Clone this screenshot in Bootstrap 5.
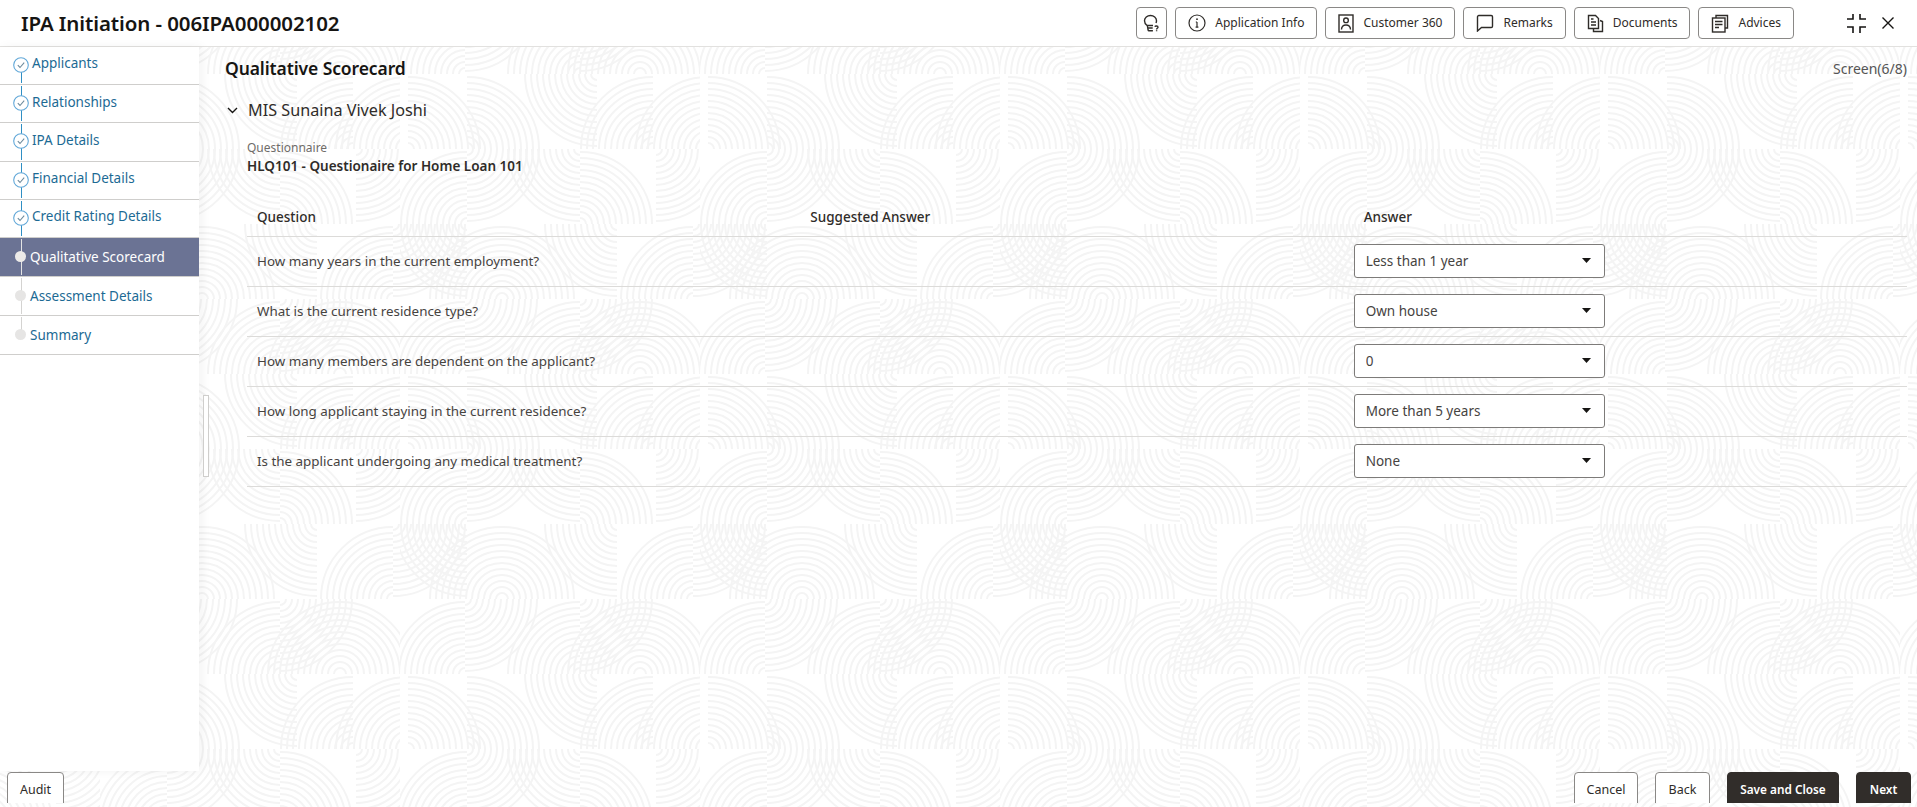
<!DOCTYPE html>
<html lang="en">
<head>
<meta charset="utf-8">
<title>IPA Initiation</title>
<link rel="stylesheet" href="https://cdn.jsdelivr.net/npm/bootstrap@5.3.0/dist/css/bootstrap.min.css">
<style>
html,body{height:100%;overflow:hidden;background:#fff}
body{font-family:"Noto Sans","Open Sans",sans-serif;color:#2f2c29;font-size:14px}
.bg-art{position:absolute;inset:0;width:100%;height:100%;z-index:0}
.shell{position:relative;z-index:1;height:807px}
.top-bar{height:47px;background:#fff;border-bottom:1px solid #e2e1df;padding:0 23px 0 21px}
.page-title{font-size:20.5px;font-weight:600;color:#161513;margin:0;letter-spacing:-.1px}
.hdr-btn{height:32px;padding:0 12px 0 12px;background:#fff;border:1px solid #8a8886;border-radius:4px;font-size:12px;color:#2f2c29;gap:9px;white-space:nowrap}
.hdr-btn svg{flex:none}
.hdr-square{width:31px;padding:0}
.hdr-tools{margin-left:52px;gap:16px}
.work{height:724px}
.side-rail{width:199px;flex:none;background:#fff;box-shadow:3px 0 10px rgba(0,0,0,.05)}
.step{position:relative;height:38.2px;padding-left:13px;border-bottom:1px solid #cfcecc;color:#1c6a94;font-size:13.5px;gap:3px;padding-bottom:4px}
.step.later{height:39px;padding-left:15px;padding-bottom:0;gap:4px}
.step.current{background:#6b7394;color:#fff}
.step::before{content:"";position:absolute;left:20.5px;top:1px;bottom:1px;width:1px;background:#2f8fc4}
.step.later::before{background:#d4d3d1}
.step.current::before{background:#e4e4e4}
.step.last::before{bottom:50%}
.step.first::before{top:50%}
.step svg{position:relative;flex:none;margin-top:3px}
.step-dot{position:relative;width:11px;height:11px;border-radius:50%;background:#e6e5e4;flex:none}
.step.current .step-dot{background:#eceae8}
.step-label{position:relative;white-space:nowrap}
.grip{position:absolute;left:203px;top:395px;width:6px;height:82px;background:#fff;border:1px solid #cfcecc;z-index:2}
.content-pane{padding:0 10px 0 26px;min-width:0}
.pane-title{font-size:17.5px;font-weight:600;color:#161513;margin:0;letter-spacing:-.1px}
.screen-count{font-size:14px;color:#555}
.pane-head{height:42px}
.person{font-size:16.2px;color:#2f2c29;margin:8px 0 0 0;height:26px;gap:10px;padding-left:2px}
.q-label{font-size:12px;color:#6f6c69;line-height:16px;margin:17px 0 0 22px}
.q-value{font-size:13.5px;font-weight:600;color:#2f2c29;line-height:20px;margin:0 0 0 22px}
.q-table{margin:30px 0 0 22px;width:1660px;table-layout:fixed;--bs-table-bg:transparent;--bs-table-color:#46433f;--bs-table-border-color:#dcdbd9}
.q-table th{font-size:13.5px;font-weight:500;color:#2f2c29;padding:0 10px 10px;height:30px;vertical-align:bottom;line-height:18px}
.q-table td{height:50px;padding:0 10px;font-size:13.4px;vertical-align:middle}
.q-select{width:251px;height:34px;padding:0 11px;font-size:13.5px;color:#46433f;border:1px solid #7d7b79;border-radius:3px;background-color:#fff;box-shadow:none;background-size:9px 5px;background-position:right 13px top 13px;background-image:url("data:image/svg+xml,%3Csvg xmlns='http://www.w3.org/2000/svg' viewBox='0 0 9 5'%3E%3Cpath d='M0 0h9L4.500 5z' fill='%23161513'/%3E%3C/svg%3E");margin-left:-10px}
.foot-bar{height:32px;overflow:hidden;padding:0 6px 0 7px}
.foot-btn{height:36px;font-size:12.5px;border-radius:4px;border:1px solid #8a8886;background:#fff;color:#2f2c29;padding:0;margin-top:1px}
.foot-dark{background:#312d2a;border-color:#312d2a;color:#fff;font-weight:600;font-size:11.8px}
.w-audit{width:57px}.w-cancel{width:64px}.w-back{width:55px}.w-save{width:112px}.w-next{width:55px}
.foot-gap{gap:17px}
</style>
</head>
<body>
<svg class="bg-art" xmlns="http://www.w3.org/2000/svg" aria-hidden="true">
  <defs>
    <g id="rings" fill="none" stroke="#f4f4f4" stroke-width="2">
      <circle r="6"/><circle r="12"/><circle r="18"/><circle r="24"/><circle r="30"/><circle r="36"/><circle r="42"/><circle r="48"/><circle r="54"/><circle r="60"/><circle r="66"/><circle r="72"/>
    </g>
    <clipPath id="cTL"><rect x="-74" y="-74" width="74" height="74"/></clipPath>
    <clipPath id="cTR"><rect x="0" y="-74" width="74" height="74"/></clipPath>
    <clipPath id="cBL"><rect x="-74" y="0" width="74" height="74"/></clipPath>
    <clipPath id="cBR"><rect x="0" y="0" width="74" height="74"/></clipPath>
    <g id="qTL" clip-path="url(#cTL)"><use href="#rings"/></g>
    <g id="qTR" clip-path="url(#cTR)"><use href="#rings"/></g>
    <g id="qBL" clip-path="url(#cBL)"><use href="#rings"/></g>
    <g id="qBR" clip-path="url(#cBR)"><use href="#rings"/></g>
    <pattern id="swirl" width="300" height="300" patternUnits="userSpaceOnUse" patternTransform="translate(100 -1)">
      <use href="#qTL" x="65" y="75"/><use href="#qBR" x="65" y="0"/>
      <use href="#qTL" x="180" y="75"/><use href="#qBR" x="180" y="0"/>
      <use href="#qTL" x="240" y="75"/><use href="#qTR" x="240" y="75"/>
      <use href="#qTL" x="308" y="150"/><use href="#qTR" x="8" y="150"/>
      <use href="#qTR" x="67" y="150"/><use href="#qBL" x="197" y="75"/>
      <use href="#qTL" x="253" y="150"/>
      <use href="#qTL" x="67" y="225"/><use href="#qBR" x="67" y="150"/>
      <use href="#qBL" x="180" y="150"/><use href="#qTR" x="180" y="225"/>
      <use href="#qBR" x="256" y="150"/>
      <use href="#qBL" x="67" y="225"/><use href="#qBR" x="-7" y="225"/>
      <use href="#qTL" x="102" y="300"/><use href="#qTR" x="102" y="300"/>
      <use href="#qBL" x="217" y="225"/><use href="#qTL" x="293" y="300"/><use href="#qBR" x="293" y="225"/>
    </pattern>
  </defs>
  <rect width="100%" height="100%" fill="url(#swirl)"/>
</svg>

<div class="shell d-flex flex-column">
  <header class="top-bar d-flex align-items-center">
    <h1 class="page-title">IPA Initiation - 006IPA000002102</h1>
    <div class="ms-auto d-flex align-items-center gap-2">
      <button class="hdr-btn hdr-square d-flex align-items-center justify-content-center" type="button" aria-label="Tips">
        <svg width="20" height="20" viewBox="0 0 20 20" fill="none" stroke="#2f2c29" stroke-width="1.400"><path d="M5 12.500C3.500 11.300 2.500 9.700 2.500 7.800 2.500 4.800 5.200 2.500 8.500 2.500s6 2.300 6 5.300c0 .8-.2 1.500-.5 2.200"/><path d="M5 12.500h6M5.300 12.500l.8 4.500c.1.400.4.700.8.700h4M5.700 15h5"/><path d="M13 13.800c.2-1.100 3-1.100 3 .4 0 1.100-1.400 1-1.400 2.200M14.600 17.300v1"/></svg>
      </button>
      <button class="hdr-btn d-flex align-items-center" type="button">
        <svg width="18" height="18" viewBox="0 0 18 18" fill="none" stroke="#2f2c29" stroke-width="1.200"><circle cx="9" cy="9" r="8"/><path d="M9 8v5.200M7.600 13.200h2.800M7.800 8H9"/><circle cx="9" cy="5.200" r=".9" fill="#2f2c29" stroke="none"/></svg>
        <span>Application Info</span>
      </button>
      <button class="hdr-btn d-flex align-items-center" type="button">
        <svg width="16" height="19" viewBox="0 0 16 19" fill="none" stroke="#2f2c29" stroke-width="1.400"><rect x="1" y="1" width="14" height="17"/><rect x="5.700" y="4" width="4.600" height="4.600" rx="2.200"/><path d="M3.500 15.500c0-3.300 2-4.500 4.500-4.500s4.500 1.200 4.500 4.500"/></svg>
        <span>Customer 360</span>
      </button>
      <button class="hdr-btn d-flex align-items-center" type="button">
        <svg width="18" height="18" viewBox="0 0 18 18" fill="none" stroke="#2f2c29" stroke-width="1.400"><path d="M2.800 1.500h12.400c.7 0 1.300.6 1.300 1.300v9.400c0 .7-.6 1.300-1.300 1.300H5.500l-4 3.500V2.800c0-.7.6-1.300 1.300-1.300z"/></svg>
        <span>Remarks</span>
      </button>
      <button class="hdr-btn d-flex align-items-center" type="button">
        <svg width="17" height="19" viewBox="0 0 17 19" fill="none" stroke="#2f2c29" stroke-width="1.400"><path d="M1.500 1.500h7l3 3v10h-10z"/><path d="M4 8h5M4 11h5M4 5h2.500"/><path d="M13 6.500l2.500 1v10h-9v-3"/></svg>
        <span>Documents</span>
      </button>
      <button class="hdr-btn d-flex align-items-center" type="button">
        <svg width="18" height="19" viewBox="0 0 18 19" fill="none" stroke="#2f2c29" stroke-width="1.400"><path d="M5 4V1.500h11.500v12.500H14"/><rect x="1.500" y="4" width="12.500" height="14"/><path d="M4 7.500h7.500M4 10.500h7.500M4 13.500h4"/></svg>
        <span>Advices</span>
      </button>
    </div>
    <div class="hdr-tools d-flex align-items-center">
      <svg width="20" height="20" viewBox="0 0 20 20" fill="none" stroke="#161513" stroke-width="1.600"><path d="M1 6h6V1M14 1v5h6M1 14h6v6M20 14h-6v6"/></svg>
      <svg width="12" height="12" viewBox="0 0 12 12" fill="none" stroke="#161513" stroke-width="1.400"><path d="M.5.500l11 11M11.500.5l-11 11"/></svg>
    </div>
  </header>

  <div class="work d-flex">
    <nav class="side-rail">
      <div class="step first d-flex align-items-center"><svg width="16" height="16" viewBox="0 0 16 16" fill="#fff" stroke="#62a8d8" stroke-width="1.100"><circle cx="8" cy="8" r="7.300"/><path d="M4.800 8.200l2.200 2.300 4.200-4.800" fill="none" stroke="#6d8a9c"/></svg><span class="step-label">Applicants</span></div>
      <div class="step d-flex align-items-center"><svg width="16" height="16" viewBox="0 0 16 16" fill="#fff" stroke="#62a8d8" stroke-width="1.100"><circle cx="8" cy="8" r="7.300"/><path d="M4.800 8.200l2.200 2.300 4.200-4.800" fill="none" stroke="#6d8a9c"/></svg><span class="step-label">Relationships</span></div>
      <div class="step d-flex align-items-center"><svg width="16" height="16" viewBox="0 0 16 16" fill="#fff" stroke="#62a8d8" stroke-width="1.100"><circle cx="8" cy="8" r="7.300"/><path d="M4.800 8.200l2.200 2.300 4.200-4.800" fill="none" stroke="#6d8a9c"/></svg><span class="step-label">IPA Details</span></div>
      <div class="step d-flex align-items-center"><svg width="16" height="16" viewBox="0 0 16 16" fill="#fff" stroke="#62a8d8" stroke-width="1.100"><circle cx="8" cy="8" r="7.300"/><path d="M4.800 8.200l2.200 2.300 4.200-4.800" fill="none" stroke="#6d8a9c"/></svg><span class="step-label">Financial Details</span></div>
      <div class="step d-flex align-items-center"><svg width="16" height="16" viewBox="0 0 16 16" fill="#fff" stroke="#62a8d8" stroke-width="1.100"><circle cx="8" cy="8" r="7.300"/><path d="M4.800 8.200l2.200 2.300 4.200-4.800" fill="none" stroke="#6d8a9c"/></svg><span class="step-label">Credit Rating Details</span></div>
      <div class="step later current d-flex align-items-center"><span class="step-dot"></span><span class="step-label">Qualitative Scorecard</span></div>
      <div class="step later d-flex align-items-center"><span class="step-dot"></span><span class="step-label">Assessment Details</span></div>
      <div class="step later last d-flex align-items-center"><span class="step-dot"></span><span class="step-label">Summary</span></div>
    </nav>
    <div class="grip"></div>
    <main class="content-pane flex-grow-1">
      <div class="pane-head d-flex align-items-center justify-content-between">
        <h2 class="pane-title">Qualitative Scorecard</h2>
        <span class="screen-count">Screen(6/8)</span>
      </div>
      <div class="person d-flex align-items-center">
        <svg width="11" height="7" viewBox="0 0 11 7" fill="none" stroke="#161513" stroke-width="1.400"><path d="M1 1l4.500 4.500L10 1"/></svg>
        <span>MIS Sunaina Vivek Joshi</span>
      </div>
      <div class="q-label">Questionnaire</div>
      <div class="q-value">HLQ101 - Questionaire for Home Loan 101</div>
      <table class="table q-table">
        <thead><tr><th>Question</th><th>Suggested Answer</th><th>Answer</th></tr></thead>
        <tbody>
          <tr><td>How many years in the current employment?</td><td></td><td><select class="form-select q-select"><option>Less than 1 year</option></select></td></tr>
          <tr><td>What is the current residence type?</td><td></td><td><select class="form-select q-select"><option>Own house</option></select></td></tr>
          <tr><td>How many members are dependent on the applicant?</td><td></td><td><select class="form-select q-select"><option>0</option></select></td></tr>
          <tr><td>How long applicant staying in the current residence?</td><td></td><td><select class="form-select q-select"><option>More than 5 years</option></select></td></tr>
          <tr><td>Is the applicant undergoing any medical treatment?</td><td></td><td><select class="form-select q-select"><option>None</option></select></td></tr>
        </tbody>
      </table>
    </main>
  </div>

  <footer class="foot-bar d-flex justify-content-between align-items-start">
    <button class="btn foot-btn w-audit" type="button">Audit</button>
    <div class="d-flex foot-gap">
      <button class="btn foot-btn w-cancel" type="button">Cancel</button>
      <button class="btn foot-btn w-back" type="button">Back</button>
      <button class="btn foot-btn foot-dark w-save" type="button">Save and Close</button>
      <button class="btn foot-btn foot-dark w-next" type="button">Next</button>
    </div>
  </footer>
</div>
<script src="https://cdn.jsdelivr.net/npm/bootstrap@5.3.0/dist/js/bootstrap.bundle.min.js"></script>
</body>
</html>
